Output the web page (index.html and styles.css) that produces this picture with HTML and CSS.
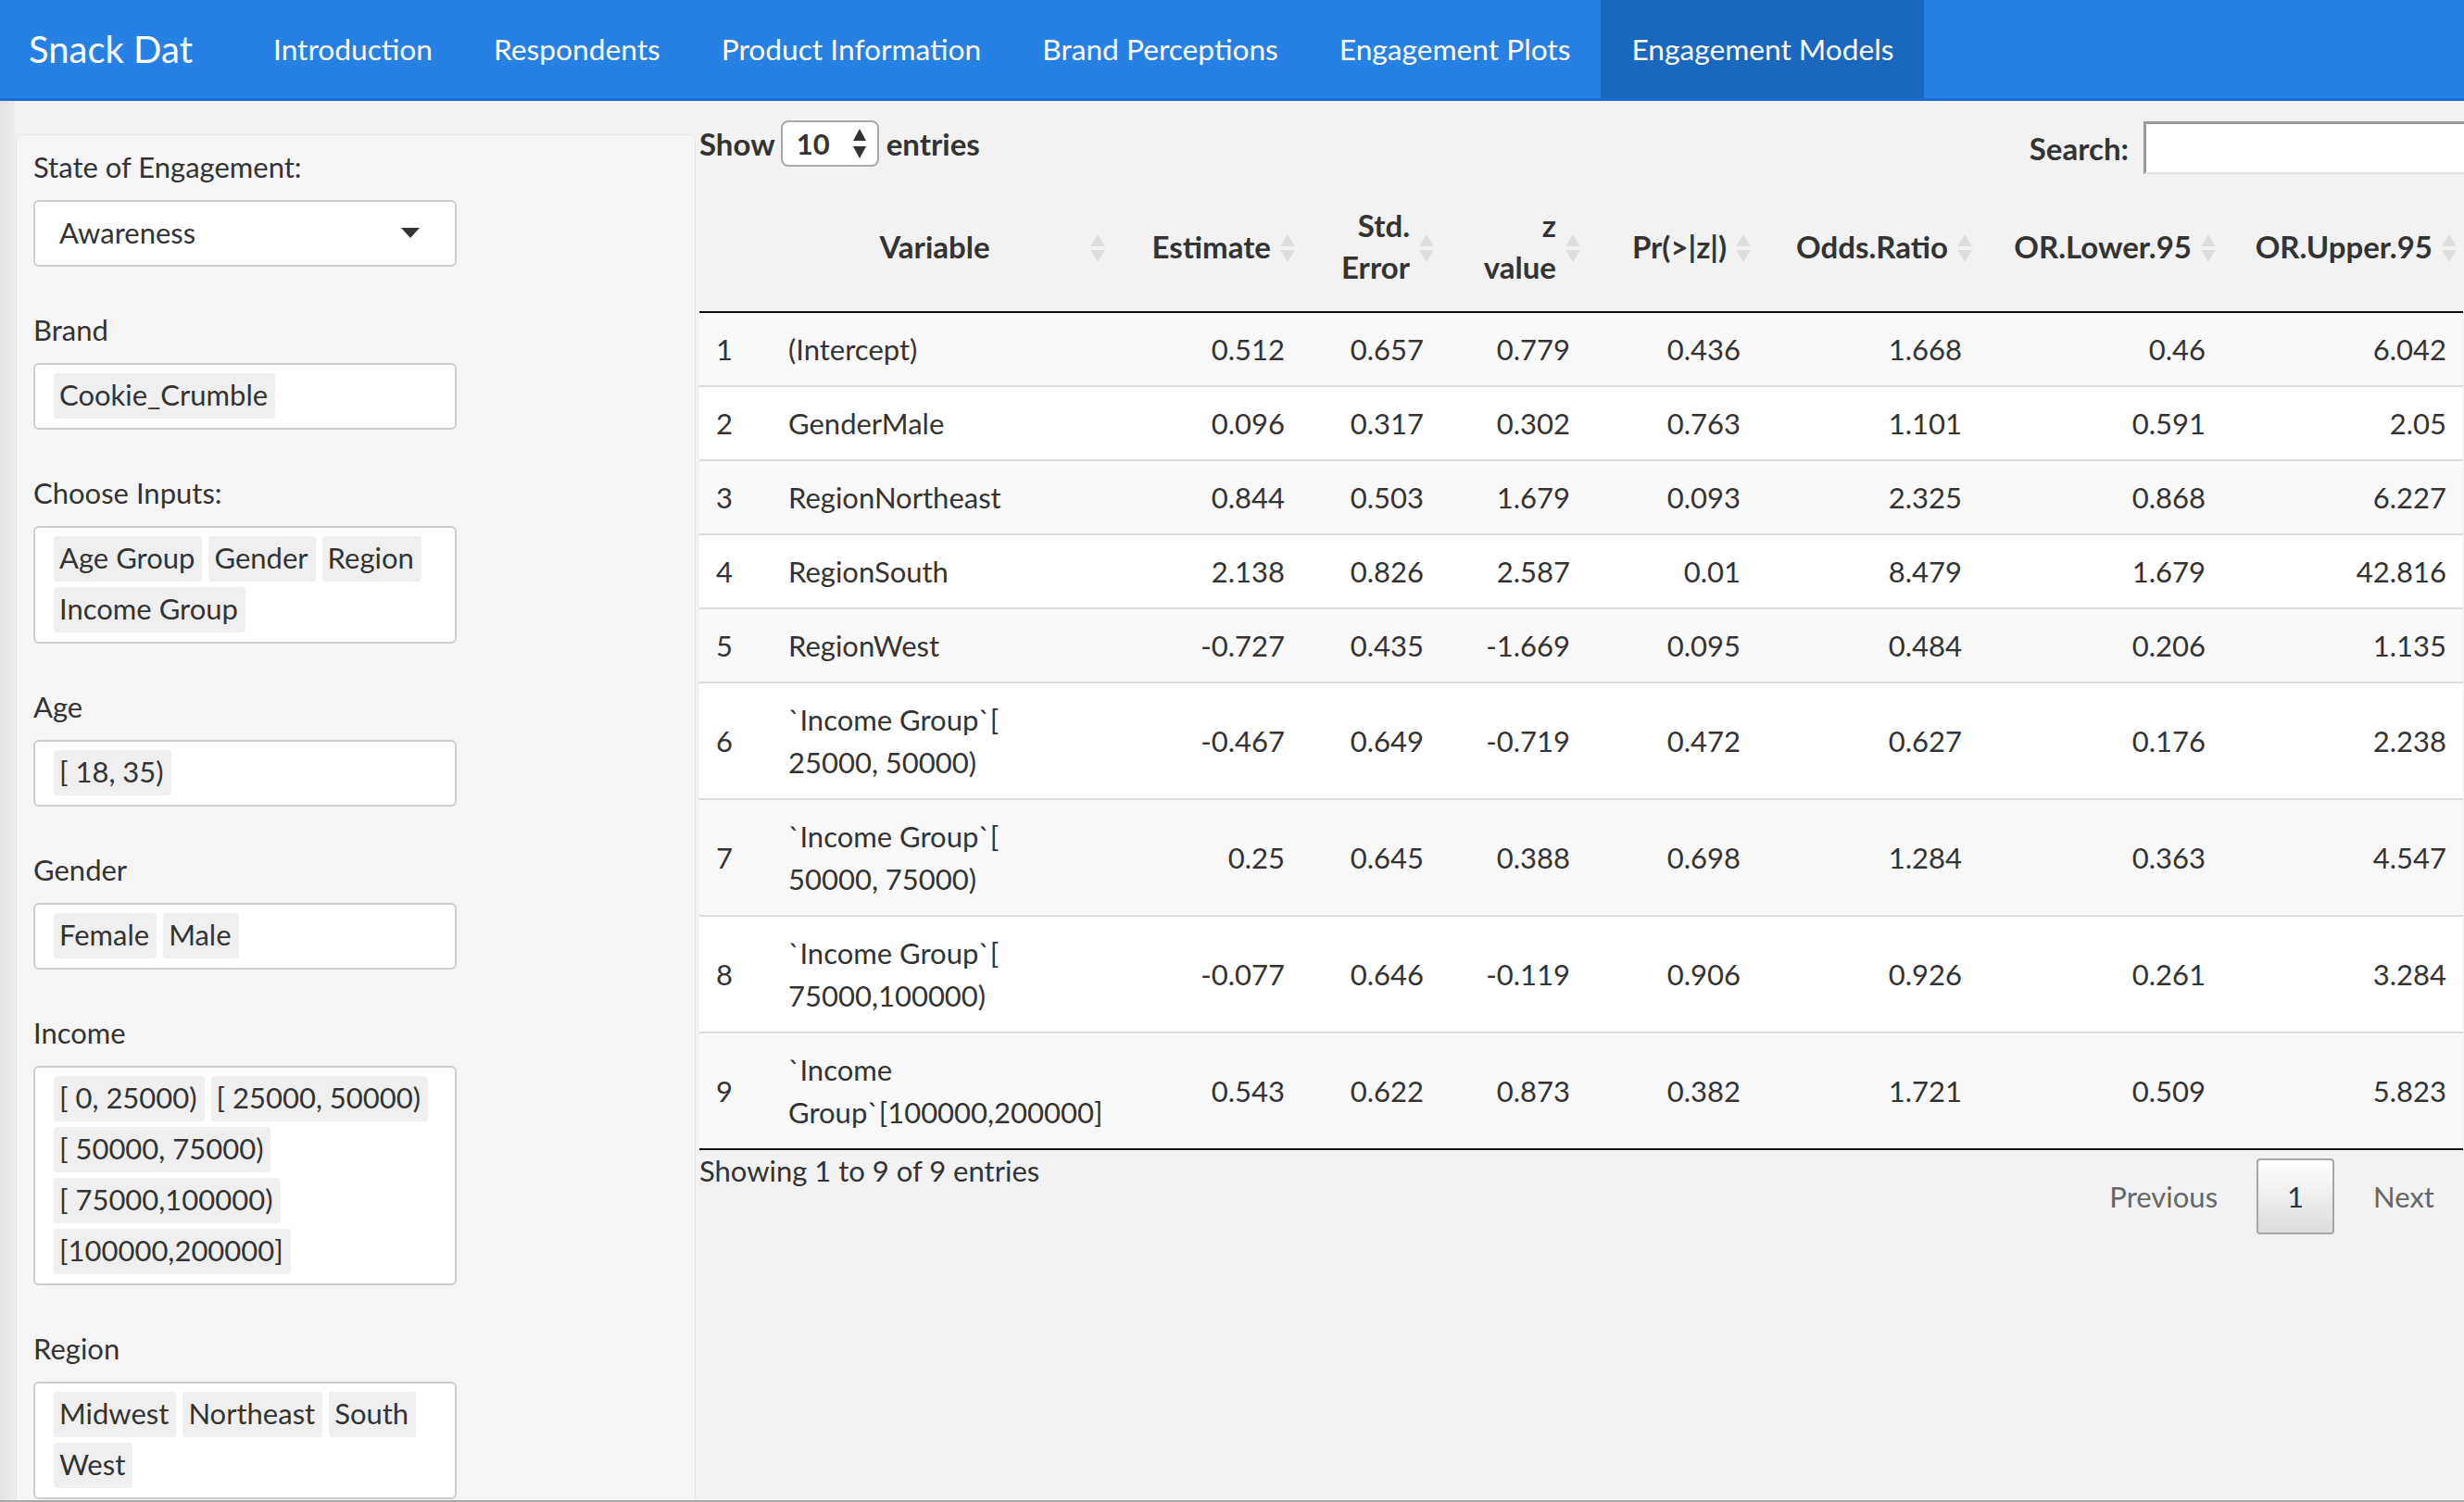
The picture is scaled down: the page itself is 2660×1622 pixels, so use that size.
FILE: index.html
```html
<!DOCTYPE html>
<html>
<head>
<meta charset="utf-8">
<title>Snack Dat</title>
<link rel="stylesheet" href="styles.css">
</head>
<body>
<div class="page">
  <nav class="navbar">
    <span class="brand">Snack Dat</span>
    <ul class="nav">
      <li>Introduction</li>
      <li>Respondents</li>
      <li>Product Information</li>
      <li>Brand Perceptions</li>
      <li>Engagement Plots</li>
      <li class="active">Engagement Models</li>
    </ul>
  </nav>
  <div class="layout">
    <aside class="well">
      <div class="form-group">
        <label class="control-label">State of Engagement:</label>
        <div class="control select-single">
          <span>Awareness</span>
          <svg class="caret" width="20" height="11" viewBox="0 0 20 11"><polygon points="0,0 20,0 10,11" fill="#333"/></svg>
        </div>
      </div>
      <div class="form-group">
        <label class="control-label">Brand</label>
        <div class="control multi"><span class="tag">Cookie_Crumble</span></div>
      </div>
      <div class="form-group">
        <label class="control-label">Choose Inputs:</label>
        <div class="control multi">
          <span class="tag">Age Group</span><span class="tag">Gender</span><span class="tag">Region</span><span class="tag">Income Group</span>
        </div>
      </div>
      <div class="form-group">
        <label class="control-label">Age</label>
        <div class="control multi"><span class="tag">[ 18, 35)</span></div>
      </div>
      <div class="form-group">
        <label class="control-label">Gender</label>
        <div class="control multi"><span class="tag">Female</span><span class="tag">Male</span></div>
      </div>
      <div class="form-group">
        <label class="control-label">Income</label>
        <div class="control multi">
          <span class="tag">[ 0, 25000)</span><span class="tag">[ 25000, 50000)</span><span class="tag">[ 50000, 75000)</span><span class="tag">[ 75000,100000)</span><span class="tag">[100000,200000]</span>
        </div>
      </div>
      <div class="form-group">
        <label class="control-label">Region</label>
        <div class="control multi">
          <span class="tag">Midwest</span><span class="tag">Northeast</span><span class="tag">South</span><span class="tag">West</span>
        </div>
      </div>
    </aside>
    <main class="main">
      <div class="dt-top">
        <div class="dt-length">
          <span>Show</span>
          <span class="len-select"><span>10</span>
            <svg class="len-arrows" width="14" height="32" viewBox="0 0 14 32"><polygon points="7,0 14,13 0,13" fill="#333"/><polygon points="0,19 14,19 7,32" fill="#333"/></svg>
          </span>
          <span>entries</span>
        </div>
        <div class="dt-filter">
          <span>Search:</span>
          <span class="search-input"></span>
        </div>
      </div>
      <table class="dt">
        <colgroup>
          <col class="c0"><col class="c1"><col class="c2"><col class="c3"><col class="c4"><col class="c5"><col class="c6"><col class="c7"><col class="c8">
        </colgroup>
        <thead>
          <tr>
            <th class="rn"></th>
            <th class="ctr sortable">Variable<svg class="sort" viewBox="0 0 16 30"><polygon points="8,0 16,13 0,13"/><polygon points="0,17 16,17 8,30"/></svg></th>
            <th class="num sortable">Estimate<svg class="sort" viewBox="0 0 16 30"><polygon points="8,0 16,13 0,13"/><polygon points="0,17 16,17 8,30"/></svg></th>
            <th class="num sortable">Std.<br>Error<svg class="sort" viewBox="0 0 16 30"><polygon points="8,0 16,13 0,13"/><polygon points="0,17 16,17 8,30"/></svg></th>
            <th class="num sortable">z<br>value<svg class="sort" viewBox="0 0 16 30"><polygon points="8,0 16,13 0,13"/><polygon points="0,17 16,17 8,30"/></svg></th>
            <th class="num sortable">Pr(&gt;|z|)<svg class="sort" viewBox="0 0 16 30"><polygon points="8,0 16,13 0,13"/><polygon points="0,17 16,17 8,30"/></svg></th>
            <th class="num sortable">Odds.Ratio<svg class="sort" viewBox="0 0 16 30"><polygon points="8,0 16,13 0,13"/><polygon points="0,17 16,17 8,30"/></svg></th>
            <th class="num sortable">OR.Lower.95<svg class="sort" viewBox="0 0 16 30"><polygon points="8,0 16,13 0,13"/><polygon points="0,17 16,17 8,30"/></svg></th>
            <th class="num sortable">OR.Upper.95<svg class="sort" viewBox="0 0 16 30"><polygon points="8,0 16,13 0,13"/><polygon points="0,17 16,17 8,30"/></svg></th>
          </tr>
        </thead>
        <tbody>
          <tr class="odd"><td>1</td><td>(Intercept)</td><td class="num">0.512</td><td class="num">0.657</td><td class="num">0.779</td><td class="num">0.436</td><td class="num">1.668</td><td class="num">0.46</td><td class="num">6.042</td></tr>
          <tr class="even"><td>2</td><td>GenderMale</td><td class="num">0.096</td><td class="num">0.317</td><td class="num">0.302</td><td class="num">0.763</td><td class="num">1.101</td><td class="num">0.591</td><td class="num">2.05</td></tr>
          <tr class="odd"><td>3</td><td>RegionNortheast</td><td class="num">0.844</td><td class="num">0.503</td><td class="num">1.679</td><td class="num">0.093</td><td class="num">2.325</td><td class="num">0.868</td><td class="num">6.227</td></tr>
          <tr class="even"><td>4</td><td>RegionSouth</td><td class="num">2.138</td><td class="num">0.826</td><td class="num">2.587</td><td class="num">0.01</td><td class="num">8.479</td><td class="num">1.679</td><td class="num">42.816</td></tr>
          <tr class="odd"><td>5</td><td>RegionWest</td><td class="num">-0.727</td><td class="num">0.435</td><td class="num">-1.669</td><td class="num">0.095</td><td class="num">0.484</td><td class="num">0.206</td><td class="num">1.135</td></tr>
          <tr class="even"><td>6</td><td>`Income Group`[<br>25000, 50000)</td><td class="num">-0.467</td><td class="num">0.649</td><td class="num">-0.719</td><td class="num">0.472</td><td class="num">0.627</td><td class="num">0.176</td><td class="num">2.238</td></tr>
          <tr class="odd"><td>7</td><td>`Income Group`[<br>50000, 75000)</td><td class="num">0.25</td><td class="num">0.645</td><td class="num">0.388</td><td class="num">0.698</td><td class="num">1.284</td><td class="num">0.363</td><td class="num">4.547</td></tr>
          <tr class="even"><td>8</td><td>`Income Group`[<br>75000,100000)</td><td class="num">-0.077</td><td class="num">0.646</td><td class="num">-0.119</td><td class="num">0.906</td><td class="num">0.926</td><td class="num">0.261</td><td class="num">3.284</td></tr>
          <tr class="odd last"><td>9</td><td>`Income<br>Group`[100000,200000]</td><td class="num">0.543</td><td class="num">0.622</td><td class="num">0.873</td><td class="num">0.382</td><td class="num">1.721</td><td class="num">0.509</td><td class="num">5.823</td></tr>
        </tbody>
      </table>
      <div class="dt-bottom">
        <div class="dt-info">Showing 1 to 9 of 9 entries</div>
        <div class="dt-paginate">
          <span class="pg-btn disabled">Previous</span>
          <span class="pg-btn current">1</span>
          <span class="pg-btn disabled">Next</span>
        </div>
      </div>
    </main>
  </div>
</div>
</body>
</html>
```

FILE: styles.css
```css
* { box-sizing: border-box; }
html, body { margin: 0; padding: 0; }
body {
  font-family: Lato, "Liberation Sans", sans-serif;
  color: #333;
  background: #f2f2f2;
  font-size: 31px;
}
.page {
  width: 2660px;
  height: 1622px;
  overflow: hidden;
  border-bottom: 2px solid #a8a8a8;
}

/* navbar */
.navbar {
  height: 109px;
  background: #2780e3;
  border-bottom: 3px solid #1a6fcf;
  display: flex;
  align-items: stretch;
}
.brand {
  color: #fff;
  font-size: 40px;
  padding-left: 31px;
  width: 262px;
  display: flex;
  align-items: center;
}
.nav {
  list-style: none;
  margin: 0;
  padding: 0;
  display: flex;
}
.nav li {
  display: flex;
  align-items: center;
  padding: 0 33px;
  color: #fff;
  font-size: 31.7px;
}
.nav li.active { background: #1967be; }

/* layout */
.layout {
  display: flex;
  align-items: flex-start;
  padding-left: 17px;
  height: 1511px;
  overflow: hidden;
  background: linear-gradient(to right, #e3e3e3 0, #ececec 15px, #f2f2f2 17px);
}

/* sidebar */
.well {
  flex: none;
  width: 734px;
  height: 1500px;
  margin-top: 36px;
  background: #f5f5f5;
  border: 1px solid #e3e3e3;
  border-radius: 6px;
  padding: 12px 18px 0;
}
.form-group { margin-bottom: 46px; }
.control-label {
  display: block;
  line-height: 44px;
  margin-bottom: 14px;
}
.control {
  width: 457px;
  background: #fff;
  border: 2px solid #cdcdcd;
  border-radius: 6px;
}
.select-single {
  height: 72px;
  display: flex;
  align-items: center;
  padding-left: 26px;
  padding-right: 38px;
  padding-bottom: 3px;
}
.caret { margin-left: auto; margin-top: 2px; }
.multi {
  display: flex;
  flex-wrap: wrap;
  column-gap: 7px;
  row-gap: 6px;
  padding: 9px 10px 10px 20px;
}
.tag {
  background: #efefef;
  border-radius: 4px;
  height: 49px;
  line-height: 47px;
  padding: 0 8px 0 6px;
  white-space: nowrap;
}

/* main */
.main {
  flex: none;
  width: 1905px;
  margin-left: 4px;
  padding-top: 22px;
}
.dt-top {
  display: flex;
  justify-content: space-between;
  align-items: flex-start;
  margin-right: -60px;
  font-weight: bold;
  font-size: 33px;
}
.dt-length {
  display: flex;
  align-items: center;
  height: 48px;
}
.len-select {
  display: flex;
  align-items: center;
  width: 106px;
  height: 50px;
  margin: 0 8px 0 6px;
  padding-left: 15px;
  background: #fff;
  border: 2px solid #a9a9a9;
  border-radius: 8px;
  font-size: 31px;
}
.len-arrows { margin-left: auto; margin-right: 12px; }
.dt-filter {
  display: flex;
  align-items: center;
  height: 57px;
}
.search-input {
  display: block;
  width: 406px;
  height: 57px;
  margin-left: 16px;
  background: #fff;
  border-top: 3px solid #9a9a9a;
  border-left: 3px solid #9a9a9a;
  border-bottom: 2px solid #e2e2e2;
}

/* table */
.dt {
  width: 1904px;
  table-layout: fixed;
  border-collapse: separate;
  border-spacing: 0;
  margin-top: 16px;
}
.c0 { width: 78px; }
.c1 { width: 367px; }
.c2 { width: 205px; }
.c3 { width: 150px; }
.c4 { width: 158px; }
.c5 { width: 184px; }
.c6 { width: 239px; }
.c7 { width: 263px; }
.c8 { width: 260px; }
.dt th {
  position: relative;
  padding: 17px 33px 25px 18px;
  line-height: 45px;
  font-size: 33px;
  font-weight: bold;
  border-bottom: 2px solid #111;
  vertical-align: middle;
  text-align: left;
}
.dt th.ctr { text-align: center; }
.dt th.num { text-align: right; }
.sort {
  position: absolute;
  right: 7px;
  top: 50%;
  width: 16px;
  height: 30px;
  margin-top: -17px;
  fill: #dedede;
}
.dt td {
  padding: 16px 18px;
  line-height: 46px;
  border-top: 2px solid #dddddd;
  vertical-align: middle;
}
.dt tbody tr:first-child td { border-top: none; }
.dt tr.last td { border-bottom: 2px solid #111; }
.dt td.num { text-align: right; }
.dt tr.odd td { background: #f9f9f9; }
.dt tr.even td { background: #fff; }

/* bottom */
.dt-bottom {
  display: flex;
  justify-content: space-between;
  align-items: flex-start;
}
.dt-info {
  padding-top: 0;
  line-height: 44px;
}
.dt-paginate {
  display: flex;
  align-items: center;
  column-gap: 12px;
  padding-top: 9px;
  margin-right: 2px;
}
.pg-btn {
  display: flex;
  align-items: center;
  justify-content: center;
  height: 82px;
  padding: 0 30px;
}
.pg-btn.disabled { color: #666; }
.pg-btn.current {
  width: 84px;
  padding: 0;
  color: #333;
  border: 2px solid #a6a6a6;
  border-radius: 4px;
  background: linear-gradient(to bottom, #ffffff 0%, #dcdcdc 100%);
}
```
